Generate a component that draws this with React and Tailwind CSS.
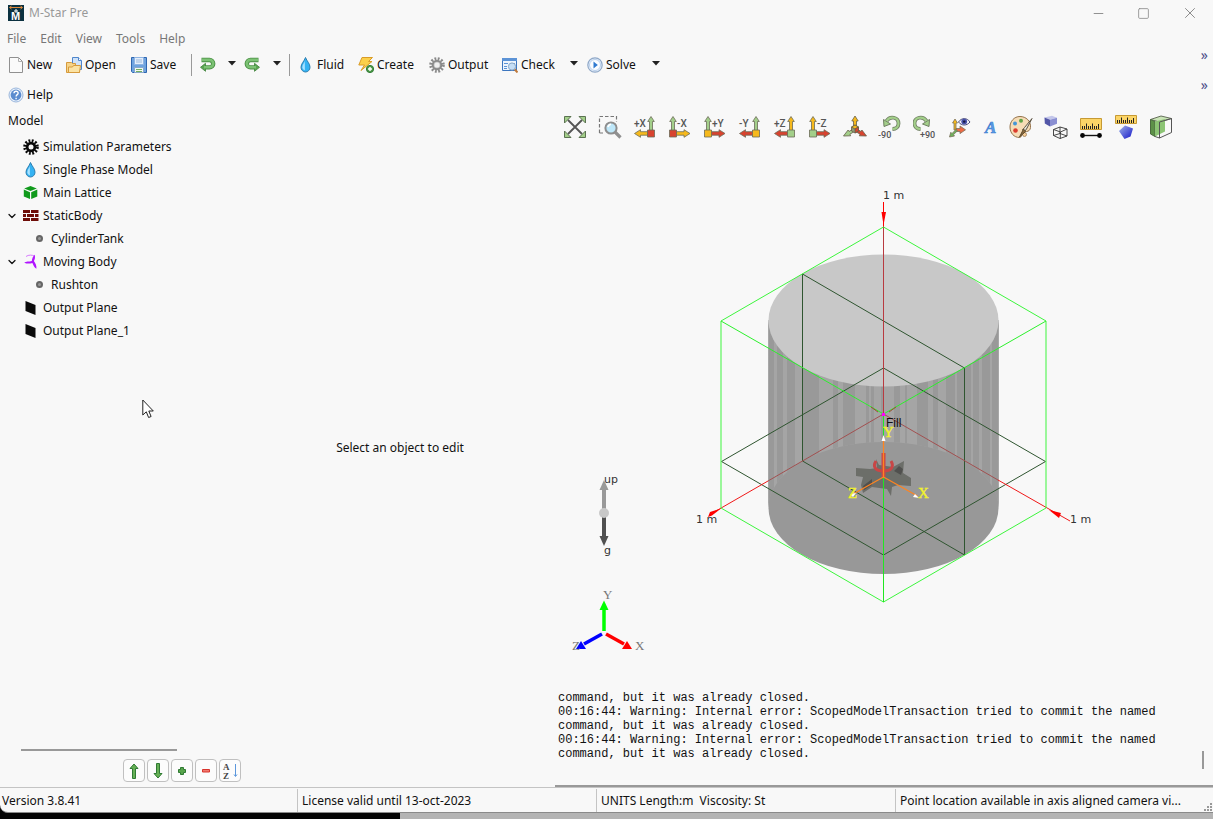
import { Minus, Square, X, ChevronDown } from 'lucide-react';

const NewIcon = () => (
  <svg viewBox="0 0 16 16" className="h-4 w-4">
    <path d="M1.500 .5h9l4 4v11h-13z" fill="#fafafa" stroke="#909090" />
    <path d="M10.500 .5v4h4" fill="none" stroke="#b0b0b0" />
  </svg>
);

const OpenIcon = () => (
  <svg viewBox="0 0 16 16" className="h-4 w-4">
    <path d="M6.500 .5h6l3 3v9h-9z" fill="#cfe2f8" stroke="#4f86cc" />
    <path d="M12.500 .5v3h3" fill="#fff" stroke="#4f86cc" />
    <path d="M.5 5.500h5l1 1h3l0 2h4v7h-13z" fill="#f6d489" stroke="#d69a3c" />
    <path d="M2.500 15.500l0-5.500h4l1-1.500h7l-1 7z" fill="#fbe3a4" stroke="#d69a3c" />
  </svg>
);

const SaveIcon = () => (
  <svg viewBox="0 0 16 16" className="h-4 w-4">
    <path d="M.5 .5h15v15h-14l-1-1z" fill="#6fa3df" stroke="#2f66b0" />
    <path d="M3.500 .5h9v7h-9z" fill="#e4eefb" stroke="#8fb4e2" />
    <path d="M5 3h6M5 5h6" stroke="#9ab8dc" />
    <path d="M3.500 10.500h9v5h-9z" fill="#f4f8f0" stroke="#88a8cc" />
    <path d="M5 12.500h6M5 14.500h6" stroke="#74b060" />
  </svg>
);

const UndoIcon = ({ flip }) => (
  <svg viewBox="0 0 16 16" className={flip ? 'mb-[3px] h-4 w-4 -scale-x-100' : 'mb-[3px] h-4 w-4'}>
    <path d="M1.500 4h8a3.700 3.700 0 0 1 0 7.400H5" fill="none" stroke="#4a8f45" strokeWidth="4.400" />
    <path d="M5.500 7.300v8l-5-4z" fill="#5aa552" stroke="#3f833b" strokeWidth=".8" />
    <path d="M2 3.900h7.500a3.700 3.700 0 0 1 0 7.400H4" fill="none" stroke="#7cc274" strokeWidth="2.600" />
  </svg>
);

const DropIcon = () => (
  <svg viewBox="0 0 16 16" className="h-4 w-4">
    <path d="M7.500 .5c1.500 4 4.500 6 4.500 9.700a4.500 4.800 0 0 1-9 0c0-3.700 3.200-5.700 4.500-9.700z" fill="#35b3f3" stroke="#2b7eb0" />
    <path d="M6.800 4c-.4 2-2.600 4-2.500 6.500.2 1.600 1.400 2.400 2.600 2.800z" fill="#a9e2ff" />
  </svg>
);

const CreateIcon = () => (
  <svg viewBox="0 0 16 16" className="h-4 w-4">
    <path d="M4 .5h10.500l-4 4H14L3 13.500l3.500-5.500H.8z" fill="#fbd04a" stroke="#d99c28" />
    <circle cx="12" cy="12" r="3.600" fill="#4f9b4a" stroke="#2f7a33" />
    <path d="M12 10v4M10 12h4" stroke="#fff" strokeWidth="1.400" />
  </svg>
);

const Gear = ({ color, hub, hole }) => (
  <svg viewBox="0 0 16 16" className="h-4 w-4">
    <circle cx="8" cy="8" r="6.300" fill="none" stroke={color} strokeWidth="3" strokeDasharray="1.800 1.500" />
    <circle cx="8" cy="8" r="4.300" fill={hub} stroke={color} strokeWidth="2" />
    <circle cx="8" cy="8" r="2.500" fill={hole} />
  </svg>
);

const CheckIcon = () => (
  <svg viewBox="0 0 16 16" className="h-4 w-4">
    <path d="M.5 1.500h14v12H.5z" fill="#eef5fd" stroke="#3d76bf" />
    <path d="M0 1h15v3H0z" fill="#5c93d6" />
    <path d="M2 6.500h4M2 9.500h3M2 11.500h3M8 6.500h5" stroke="#5c93d6" />
    <path d="M12.500 12l3 3.500" stroke="#c07a3c" strokeWidth="2" />
    <circle cx="10" cy="9.500" r="3.600" fill="#c5def6" stroke="#8aa8c8" />
  </svg>
);

const SolveIcon = () => (
  <svg viewBox="0 0 16 16" className="h-4 w-4">
    <circle cx="8" cy="8" r="7.200" fill="#e8f0fa" stroke="#8fa8c8" strokeWidth="1.200" />
    <circle cx="8" cy="8" r="5.500" fill="#fbfdff" stroke="#b9d0ec" />
    <path d="M6.500 4.500L10.800 8l-4.300 3.500z" fill="#2f7ad0" />
  </svg>
);

const HelpIcon = () => (
  <svg viewBox="0 0 16 16" className="h-4 w-4">
    <circle cx="8" cy="8" r="7" fill="#e9f1fb" stroke="#9ab6dc" />
    <circle cx="8" cy="8" r="5.400" fill="#5b8ccf" />
    <path d="M6 6.300c.2-2.800 4.200-2.500 4.100-.1 0 1.400-2 1.500-2 3.300M8.100 10.800v1.400" fill="none" stroke="#fff" strokeWidth="1.400" />
  </svg>
);

const CubeIcon = () => (
  <svg viewBox="0 0 16 16" className="h-4 w-4">
    <path d="M7.500 1l6.300 2.400-6.300 2.700-6.300-2.700zM.8 4.600L7 7.200v6.800L.8 11.500zM14.300 4.600L8.200 7.200v6.800l6.100-2.500z" fill="#109a1c" />
  </svg>
);

const BricksIcon = () => (
  <svg viewBox="0 0 16 16" className="h-4 w-4" fill="#6e0d08">
    <path d="M0 2h7v3H0zM8 2h7.500v3H8zM0 6h3v3H0zM4 6h7v3H4zM12 6h3.500v3H12zM0 10h7v3H0zM8 10h7.500v3H8z" />
  </svg>
);

const PropIcon = () => (
  <svg viewBox="0 0 16 16" className="h-4 w-4">
    <path d="M3 2.500c2.500-2 6.500-1.500 8.500-.5" fill="none" stroke="#d77bff" />
    <path d="M11.800 .8c.6 3.500-.2 5-.9 6.300 1.500 2.200 2.900 4.700 2.500 7.700-2-.8-3.200-3.700-4-5.700C6 10 3 9.700 1.200 8.400 3 7.500 6 7.700 8.800 7 9.200 4.500 10 2 11.800 .8z" fill="#b014ff" />
  </svg>
);

const PlaneIcon = () => (
  <svg viewBox="0 0 16 16" className="h-4 w-4">
    <path d="M2.500 1l10 4v10l-10-4z" fill="#0a0a0a" />
  </svg>
);

const Caret = () => (
  <svg viewBox="0 0 8 5" className="mb-[3px] h-[5px] w-2">
    <path d="M0 0h8L4 4.500z" fill="#222" />
  </svg>
);

const tools = [
  { label: 'New', icon: <NewIcon />, cls: 'w-[58px]' },
  { label: 'Open', icon: <OpenIcon />, cls: 'w-[65px]' },
  { label: 'Save', icon: <SaveIcon />, cls: 'w-[60px]' },
  { sep: true },
  { name: 'Undo', icon: <UndoIcon />, cls: 'w-[32px] pl-2' },
  { name: 'Undo history', icon: <Caret />, cls: 'w-[20px] pl-1' },
  { name: 'Redo', icon: <UndoIcon flip />, cls: 'w-[25px]' },
  { name: 'Redo history', icon: <Caret />, cls: 'w-[20px] pl-1' },
  { sep: true },
  { label: 'Fluid', icon: <DropIcon />, cls: 'w-[68px] pl-2' },
  { label: 'Create', icon: <CreateIcon />, cls: 'w-[71px]' },
  { label: 'Output', icon: <Gear color="#8a8a8a" hub="#c4c4c4" hole="#efefef" />, cls: 'w-[73px]' },
  { label: 'Check', icon: <CheckIcon />, cls: 'w-[64px]' },
  { name: 'Check options', icon: <Caret />, cls: 'w-[21px] pl-1' },
  { label: 'Solve', icon: <SolveIcon />, cls: 'w-[61px]' },
  { name: 'Solve options', icon: <Caret />, cls: 'w-[20px] pl-1' },
];

const tree = [
  { label: 'Simulation Parameters', icon: <Gear color="#0a0a0a" hub="#0a0a0a" hole="#f8f8f8" /> },
  { label: 'Single Phase Model', icon: <DropIcon /> },
  { label: 'Main Lattice', icon: <CubeIcon /> },
  { label: 'StaticBody', icon: <BricksIcon />, open: true },
  { label: 'CylinderTank', child: true },
  { label: 'Moving Body', icon: <PropIcon />, open: true },
  { label: 'Rushton', child: true },
  { label: 'Output Plane', icon: <PlaneIcon /> },
  { label: 'Output Plane_1', icon: <PlaneIcon /> },
];

const GREEN = '#a3cf8a';
const RED = '#d8432f';
const GOLD = '#f6b91c';

// Axis view: an upright arrow and a sideways arrow that share a corner block
const AxisIcon = ({ label, left, up, side, corner }) => {
  const x = left ? 18 : 5;
  return (
    <svg viewBox="0 0 24 24" className="h-6 w-6">
      <g stroke="#6b6b58" strokeWidth=".8">
        <path d={`M${x - 1.500} 16V6.500h-1.800L${x} 1.500l3.300 5h-1.800V16z`} fill={up} />
        <path
          d={left ? 'M15 16.700H7.500v-2L1.500 18.500l6 3.800v-2.100H15z' : 'M8 16.700h8v-2l6 3.800-6 3.800v-2.100H8z'}
          fill={side}
        />
        <path d={`M${x - 3.500} 15h7v7h-7z`} fill={corner} />
      </g>
      <text x={left ? 1 : 9} y="11.500" fontFamily="Roboto, sans-serif" fontWeight="500" fontSize="10" fill="#555">
        {label}
      </text>
    </svg>
  );
};

const RotateIcon = ({ label, cw }) => (
  <svg viewBox="0 0 24 24" className="h-6 w-6">
    <g transform={cw ? 'translate(22 0) scale(-1 1)' : undefined}>
      <path d="M8.500 6C12 .5 20.500 2 20.500 8.500c0 3.500-2.600 5.500-6 5.500" fill="none" stroke="#6f7f62" strokeWidth="3.800" />
      <path d="M5.500 4.500l.5 7 6.500-2.500z" fill={GREEN} stroke="#6f7f62" />
      <path d="M8.500 6C12 .5 20.500 2 20.500 8.500c0 3.500-2.600 5.500-6 5.500" fill="none" stroke={GREEN} strokeWidth="2.200" />
    </g>
    <text x={cw ? 7 : 0} y="23" fontFamily="Roboto, sans-serif" fontWeight="500" fontSize="9" fill="#555">
      {label}
    </text>
  </svg>
);

const FitIcon = () => (
  <svg viewBox="0 0 24 24" className="h-6 w-6">
    <path d="M5 5l14 14M19 5L5 19" stroke="#555" strokeWidth="1.800" />
    <path d="M1.500 1.500H8L1.500 8zM22.500 1.500V8L16 1.500zM1.500 22.500V16L8 22.500zM22.500 22.500H16l6.500-6.500z" fill={GREEN} stroke="#5c7352" />
  </svg>
);

const ZoomBoxIcon = () => (
  <svg viewBox="0 0 24 24" className="h-6 w-6">
    <path d="M1.500 18V1.500h17V7M1.500 18h4" fill="none" stroke="#777" strokeWidth="1.200" strokeDasharray="3.500 2" />
    <path d="M17 17l5.500 5.500" stroke="#909090" strokeWidth="3.200" />
    <circle cx="13" cy="13" r="5.600" fill="#bfe8fa" stroke="#8e8e8e" strokeWidth="2" />
    <path d="M10 12a3.500 3.500 0 0 1 3-2.800" fill="none" stroke="#fff" strokeWidth="1.600" />
  </svg>
);

const IsoIcon = () => (
  <svg viewBox="0 0 24 24" className="h-6 w-6">
    <g stroke="#66604a" strokeWidth=".8">
      <path d="M10.500 11V6H8.800L12 1l3.200 5h-1.700v5z" fill={GOLD} />
      <path d="M10 14l-4 2.500-.9-1.500-4.600 6 7.200-.2-.8-1.600 4.500-2.700z" fill={GREEN} />
      <path d="M14 14l4 2.500 .9-1.500 4.600 6-7.200-.2 .8-1.600-4.500-2.700z" fill={RED} />
      <path d="M12 10l3.500 2v4L12 18l-3.500-2v-4z" fill="#8f9a78" />
      <path d="M12 10l3.500 2-3.500 2-3.500-2z" fill={GOLD} />
      <path d="M12 14l3.500-2v4L12 18z" fill={RED} />
    </g>
  </svg>
);

const AxesEyeIcon = () => (
  <svg viewBox="0 0 24 24" className="h-6 w-6">
    <g stroke="#7a705c" strokeWidth=".8">
      <path d="M6 15V8H4.500L7 4l2.500 4H8v7z" fill={GOLD} />
      <path d="M8 13.500h4v-2.500l5.500 3.800-5.500 3.800V16.500H8z" fill="#ee6a44" />
      <path d="M8 14.500l-4 4-1.200-1.200L1.500 22l5-1-1-1.300 4-4z" fill="#6db35a" />
    </g>
    <path d="M10.500 7c3-4.500 8.500-4.500 11.500 0-3 4-8.500 4-11.500 0z" fill="#f4f4fa" stroke="#4a4a78" />
    <circle cx="16.200" cy="6.600" r="2.900" fill="#4750a8" />
    <circle cx="16.200" cy="6.600" r="1.200" fill="#15153c" />
  </svg>
);

const LabelsIcon = () => (
  <svg viewBox="0 0 24 24" className="h-6 w-6">
    <text x="7" y="17.500" fontFamily="Liberation Serif, serif" fontWeight="bold" fontStyle="italic" fontSize="17" fill="#5b9be6" stroke="#3f7fd0" strokeWidth=".6">
      A
    </text>
  </svg>
);

const PaletteIcon = () => (
  <svg viewBox="0 0 24 24" className="h-6 w-6">
    <path d="M11 1.500C5 1.500 1 6.500 1 12c0 6 4 10.500 9.500 10.500 2.500 0 1.500-3 2.500-4.500 1.500-2 8 0 8.500-5.500C22 6 17 1.500 11 1.500z" fill="#f6dcb6" stroke="#94724a" />
    <circle cx="6" cy="8.500" r="2" fill="#4596d6" />
    <circle cx="12" cy="5.800" r="2" fill="#5fa346" />
    <circle cx="6.500" cy="15.500" r="2.300" fill="#dc3b2c" />
    <circle cx="15.500" cy="19.500" r="2" fill="#f7cf9a" stroke="#94724a" strokeWidth=".7" />
    <path d="M23 3.500l-7.500 9-2 2.500 2 1.500 2-2.500z" fill="#e8e4d8" stroke="#5c5242" />
    <path d="M14.500 14l-4 8 6-5.500z" fill="#8c6b40" stroke="#5c4a2c" />
  </svg>
);

const SolidWireIcon = () => (
  <svg viewBox="0 0 24 24" className="h-6 w-6">
    <path d="M.5 2.500L8 .8l5 2-7 2z" fill="#c3c6ea" />
    <path d="M.5 2.500l5.500 2.300v6.700L.8 8.500z" fill="#5357a8" />
    <path d="M6 4.800l7-2v6l-7 2.700z" fill="#8a8fd2" />
    <path d="M16 12l7 2v7l-7 2.500-6.500-3v-6zM9.500 14.500l7 2.500 6.500-3M16.300 17v6.500M16 12v6.500l-6.500 2M16 18.500l7 2.500" fill="none" stroke="#333" strokeWidth=".9" />
  </svg>
);

const Ruler = ({ h }) => (
  <>
    <path d={`M1.500 1.500h21v${h}h-21z`} fill="#fcd567" stroke="#c69a34" />
    <path d="M3.500 9v3M5.500 9v3M7.500 6.500V12M9.500 9v3M11.500 9v3M13.500 6.500V12M15.500 9v3M17.500 9v3M19.500 7v5" stroke="#222" transform={`translate(0 ${h - 11})`} />
  </>
);

const MeasureIcon = () => (
  <svg viewBox="0 0 24 24" className="h-6 w-6">
    <g transform="translate(0 2)">
      <Ruler h={11} />
    </g>
    <path d="M4 20.500h16" stroke="#111" strokeWidth="1.400" />
    <circle cx="3.500" cy="20.500" r="2.400" fill="#050505" />
    <circle cx="20.500" cy="20.500" r="2.400" fill="#050505" />
  </svg>
);

const MeasureShapeIcon = () => (
  <svg viewBox="0 0 24 24" className="h-6 w-6">
    <defs>
      <linearGradient id="pent" x1="0" y1="0" x2="1" y2="1">
        <stop offset="0" stopColor="#9fb4ea" />
        <stop offset="1" stopColor="#1515c8" />
      </linearGradient>
    </defs>
    <g transform="translate(0 -1)">
      <Ruler h={8} />
    </g>
    <path d="M11 10.500l8 3-2.500 8-6 2.500-5.500-8z" fill="url(#pent)" />
  </svg>
);

const ClipIcon = () => (
  <svg viewBox="0 0 24 24" className="h-6 w-6">
    <path d="M1.500 4.500L12 1l10.500 2.500-12 3.500z" fill="#c9e4b6" stroke="#666f5c" />
    <path d="M1.500 4.500l4.500 2v15l-4.500-2.500z" fill="#5d9148" stroke="#4c6b40" />
    <path d="M6 6.500L16 4v12.500l-10 5z" fill="#8cc474" />
    <path d="M10.500 7l12-3.500v14l-12 5.500z" fill="none" stroke="#555" />
    <path d="M6 21.500l4.500 1.500" stroke="#555" />
  </svg>
);

const viewTools = [
  { name: 'Fit view', icon: <FitIcon /> },
  { name: 'Zoom to box', icon: <ZoomBoxIcon /> },
  { name: 'View +X', icon: <AxisIcon label="+X" left up={GREEN} side={GOLD} corner={RED} /> },
  { name: 'View -X', icon: <AxisIcon label="-X" up={GREEN} side={GOLD} corner={RED} /> },
  { name: 'View +Y', icon: <AxisIcon label="+Y" up={GREEN} side={RED} corner={GOLD} /> },
  { name: 'View -Y', icon: <AxisIcon label="-Y" left up={GREEN} side={RED} corner={GOLD} /> },
  { name: 'View +Z', icon: <AxisIcon label="+Z" left up={GOLD} side={RED} corner={GREEN} /> },
  { name: 'View -Z', icon: <AxisIcon label="-Z" up={GOLD} side={RED} corner={GREEN} /> },
  { name: 'Isometric', icon: <IsoIcon /> },
  { name: 'Rotate -90', icon: <RotateIcon label="-90" /> },
  { name: 'Rotate +90', icon: <RotateIcon label="+90" cw /> },
  { name: 'Show axes', icon: <AxesEyeIcon /> },
  { name: 'Labels', icon: <LabelsIcon />, narrow: true },
  { name: 'Colors', icon: <PaletteIcon /> },
  { name: 'Solid or wireframe', icon: <SolidWireIcon /> },
  { name: 'Measure distance', icon: <MeasureIcon /> },
  { name: 'Measure shape', icon: <MeasureShapeIcon /> },
  { name: 'Clip', icon: <ClipIcon /> },
];

const treeTools = [
  { name: 'Move up', icon: <path d="M8 1l4 4.500H9.500v10h-3v-10H4z" fill="#66b055" stroke="#2f7a33" /> },
  { name: 'Move down', icon: <path d="M8 15l-4-4.500h2.500V.5h3v10H12z" fill="#66b055" stroke="#2f7a33" /> },
  { name: 'Add', icon: <path d="M6.500 4.500h3v2h2v3h-2v2h-3v-2h-2v-3h2z" fill="#58a54c" stroke="#2f7a33" /> },
  { name: 'Remove', icon: <path d="M4.500 6.500h7v2.500h-7z" fill="#f07a70" stroke="#d8342c" /> },
  {
    name: 'Sort',
    icon: (
      <>
        <text x="1" y="6.500" fontFamily="Liberation Serif, serif" fontWeight="bold" fontSize="9" fill="#444">A</text>
        <text x="1" y="15.500" fontFamily="Liberation Serif, serif" fontWeight="bold" fontSize="9" fill="#444">Z</text>
        <path d="M13.500 1v12M12 11.500l1.500 2 1.500-2" fill="none" stroke="#5b97dc" />
      </>
    ),
  },
];

// x and width of the darker facets on the tank wall
const facets = [
  [768, 6], [777, 6], [787, 8], [803, 16], [833, 5], [843, 12], [866, 3], [871, 3], [881, 3],
  [894, 6], [905, 2], [917, 11], [933, 5], [946, 9], [957, 14], [973, 6], [982, 8], [992, 7],
];

const log = `command, but it was already closed.
00:16:44: Warning: Internal error: ScopedModelTransaction tried to commit the named
command, but it was already closed.
00:16:44: Warning: Internal error: ScopedModelTransaction tried to commit the named
command, but it was already closed.`;

const Viewport = () => (
  <svg viewBox="550 145 663 545" className="block w-full min-h-0 flex-1" role="img" aria-label="Model view">
    <defs>
      <clipPath id="wall">
        <path d="M768.500 320v188a115 66 0 0 1 230 0V320a115 66 0 0 1-230 0z" />
      </clipPath>
    </defs>

    {/* tank */}
    <path d="M768.500 320v188a115 66 0 0 0 230 0V320z" fill="#989898" />
    <g clipPath="url(#wall)">
      <path d="M768 320h231v188h-231z" fill="#a5a5a5" />
      {facets.map(([x, w]) => (
        <rect key={x} x={x} y="320" width={w} height="188" fill="#999" />
      ))}
    </g>
    <ellipse cx="883.500" cy="320.500" rx="115" ry="66" fill="#c8c8c8" />

    {/* impeller */}
    <path d="M856 468l14 1 7-1-1-9 3 6 14 2 11-6-1 12 8 5v8l-13-1-6 2-1 9-4-7-15-2-9 6-2-8 2-8-7-1z" fill="#6c6e69" />
    <path d="M863 486l9-7v6l-8 5zM894 471l5-5 4 3-2 6z" fill="#50504e" />
    <g fill="none" stroke="#c84646">
      <path d="M883.500 453v24" strokeWidth="4" />
      <path d="M876 461c-4 6 0 10 7.500 10s11-4 7.500-10" strokeWidth="3" />
    </g>

    {/* slice planes */}
    <path d="M802.500 274L964.500 368v187L802.500 461zM883.500 368l162 93.500-162 93.500-162-93.500z" fill="none" stroke="#2f5530" />

    {/* axis arrows */}
    <g fill="none" stroke="#f01818">
      <path d="M883.500 202v25" stroke="#f00" />
      <path d="M883.500 227v187" stroke="#b83a40" />
      <path d="M883.500 414L768 481M883.500 414L998 480" stroke="#a25050" />
      <path d="M768 481l-59 34M998 480l72 41" />
    </g>
    <path d="M881.500 212h4.500l-2.500 13zM708 517l2-5 11-3.500-9 7zM1049 510l12 3-2 5z" fill="#f00" />

    {/* lattice bounds */}
    <path d="M883.500 227l162.500 94v187l-162.500 94-162.500-94V321z" fill="none" stroke="#3df53d" />
    <path d="M721 321l162.500 93 162.500-93" fill="none" stroke="#2cf02c" />
    <path d="M883.500 414v188" stroke="#20e820" />
    <path d="M871 407l7 5M896 407l-7 5" stroke="#a04830" />
    <path d="M882 413h3v3h-3z" fill="#f0f" />

    {/* body axes */}
    <path d="M883.500 477v-40M883.500 477l-32 18M883.500 477l34 19" fill="none" stroke="#ff8420" strokeWidth="1.300" />
    <path d="M883.500 435l2 6h-4zM850 494l6-1-3 4zM919 498l-6-1 2-3z" fill="#fff" />
    <g fontFamily="Liberation Serif, serif" fontSize="15" fill="#f2f22c" stroke="#f2f22c" strokeWidth=".4">
      <text x="883" y="437">Y</text>
      <text x="848" y="498">Z</text>
      <text x="918" y="498">X</text>
    </g>
    <text x="886" y="427" fontFamily="Liberation Sans, sans-serif" fontSize="12" fill="#111">Fill</text>

    <g fontFamily="DejaVu Sans, sans-serif" fontSize="11" fill="#333">
      <text x="883" y="199">1 m</text>
      <text x="696" y="523">1 m</text>
      <text x="1070" y="523">1 m</text>
      <text x="604" y="483">up</text>
      <text x="604" y="554">g</text>
    </g>

    {/* gravity */}
    <path d="M604 513v-24" stroke="#999" strokeWidth="4" />
    <path d="M604 480l4.500 10h-9z" fill="#999" />
    <path d="M604 513v24" stroke="#505050" strokeWidth="4" />
    <path d="M604 546l4.500-10h-9z" fill="#505050" />
    <circle cx="604" cy="513" r="5" fill="#c8c8c8" />

    {/* orientation triad */}
    <path d="M604 631v-23" stroke="#0f0" strokeWidth="3.500" />
    <path d="M604 600.500l4.500 9.500h-9z" fill="#0f0" />
    <path d="M602 634l-18 10" stroke="#00f" strokeWidth="3.500" />
    <path d="M576 649l5-8 5 8z" fill="#00f" />
    <path d="M606 634l18 10" stroke="#f00" strokeWidth="3.500" />
    <path d="M632 649l-5-8-5 8z" fill="#f00" />
    <g fontFamily="Liberation Serif, serif" fontSize="13" fill="#777">
      <text x="603" y="599">Y</text>
      <text x="572" y="650">Z</text>
      <text x="635" y="650">X</text>
    </g>
  </svg>
);

const TitleBar = () => (
  <header className="flex h-[26px] items-center pl-2 text-[#999]">
    <svg viewBox="0 0 16 16" className="h-4 w-4">
      <path d="M0 0h16v16H0z" fill="#0b3140" />
      <path d="M2 2.500h12M3.500 1L1.500 2.500 3.500 4M12.500 1l2 1.500-2 1.500" fill="none" stroke="#e08a3c" />
      <path d="M8 4v4M6 6h4" stroke="#fff" />
      <text x="3" y="14.500" fontFamily="Liberation Sans, sans-serif" fontWeight="bold" fontSize="11" fill="#fff">M</text>
    </svg>
    <span className="ml-[5px]">M-Star Pre</span>
    <div className="ml-auto flex h-full text-[#8a8a8a]">
      <button aria-label="Minimize" className="flex w-[46px] items-center justify-center"><Minus size={15} strokeWidth={1.500} /></button>
      <button aria-label="Maximize" className="flex w-[45px] items-center justify-center"><Square size={13} strokeWidth={1.500} /></button>
      <button aria-label="Close" className="flex w-[47px] items-center justify-center"><X size={18} strokeWidth={1.300} /></button>
    </div>
  </header>
);

const ToolButton = ({ label, name, icon, cls }) => (
  <button aria-label={name} className={`flex h-[30px] shrink-0 items-center gap-[3px] ${cls}`}>
    {icon}
    {label && <span>{label}</span>}
  </button>
);

const More = ({ name }) => (
  <button aria-label={name} className="mr-[5px] mb-5 ml-auto text-sm text-[#4c4c88]">»</button>
);

const App = () => (
  <div className="flex min-h-screen flex-col bg-[linear-gradient(to_right,#050505_400px,#b4b4b4_400px)] font-['Noto_Sans',sans-serif] text-[12px] leading-4 text-[#111]">
    <div className="flex flex-1 flex-col rounded-bl-lg border-b border-[#8a8a8a] bg-[#f8f8f8]">
      <TitleBar />

      <nav className="flex h-[25px] items-center gap-[14px] pl-[7px] text-[#777]">
        {['File', 'Edit', 'View', 'Tools', 'Help'].map((item) => (
          <button key={item}>{item}</button>
        ))}
      </nav>

      <div className="flex h-7 items-center pl-2">
        {tools.map((tool, i) =>
          tool.sep ? <div key={i} className="h-[22px] w-px bg-[#9a9a9a]" /> : <ToolButton key={i} {...tool} />
        )}
        <More name="More tools" />
      </div>
      <div className="flex h-[30px] items-center pt-px pl-2">
        <ToolButton label="Help" icon={<HelpIcon />} cls="w-[60px]" />
        <More name="More help" />
      </div>

      <main className="flex flex-1">
        <aside className="relative flex w-[250px] shrink-0 flex-col">
          <h2 className="mb-[2px] flex h-6 items-center pl-2">Model</h2>
          <ul>
            {tree.map((row) => (
              <li key={row.label} className={`flex h-[23px] items-center ${row.child ? 'pl-[36px]' : 'pl-[6px]'}`}>
                {row.child ? (
                  <span className="mr-2 h-[7px] w-[7px] rounded-full border-2 border-[#666] bg-[#999]" />
                ) : (
                  <>
                    <span className="w-[17px]">{row.open && <ChevronDown size={12} strokeWidth={2.500} />}</span>
                    <span className="mr-1">{row.icon}</span>
                  </>
                )}
                <span>{row.label}</span>
              </li>
            ))}
          </ul>
          <svg viewBox="0 0 12 20" className="absolute top-[290px] left-[142px] h-5 w-3">
            <path d="M.8 1v15l3.500-3.200 2.300 5.700 2.500-1-2.300-5.500h4.500z" fill="#fff" stroke="#222" />
          </svg>
          <div className="mt-auto mb-2 ml-[21px] h-[2px] w-[156px] bg-[#999]" />
          <div className="mb-[5px] flex gap-[2px] pl-[123px]">
            {treeTools.map((tool) => (
              <button key={tool.name} aria-label={tool.name} className="flex h-[23px] w-[22px] items-center justify-center rounded-sm border border-[#c0c0c0] bg-[#fcfcfc]">
                <svg viewBox="0 0 16 16" className="h-4 w-4">{tool.icon}</svg>
              </button>
            ))}
          </div>
        </aside>

        <section className="flex w-[300px] shrink-0 items-center justify-center">Select an object to edit</section>

        <section className="flex min-w-0 flex-1 flex-col">
          <div className="flex h-[35px] items-center pl-[7px]">
            {viewTools.map((tool) => (
              <button key={tool.name} aria-label={tool.name} className={`flex shrink-0 justify-center ${tool.narrow ? 'w-[26px]' : 'w-[35px]'}`}>
                {tool.icon}
              </button>
            ))}
          </div>
          <Viewport />
          <div className="ml-[5px] flex h-[96px] items-start justify-between border-b-2 border-[#999] pr-[9px] pl-[3px]">
            <pre className="font-['Liberation_Mono',monospace] text-[12px] leading-[14px]">{log}</pre>
            <div className="mt-[60px] h-[18px] w-[2px] bg-[#999]" />
          </div>
        </section>
      </main>

      <footer className="grid h-[25px] grid-cols-[297fr_299fr_299fr_318fr] border-t border-[#c4c4c4] pt-px">
        <div className="flex items-center pl-[2px]">Version 3.8.41</div>
        <div className="flex items-center border-l border-[#c4c4c4] pl-1">License valid until 13-oct-2023</div>
        <div className="flex items-center border-l border-[#c4c4c4] pl-1 whitespace-pre">UNITS Length:m  Viscosity: St</div>
        <div className="flex min-w-0 items-center border-l border-[#c4c4c4] pl-1">
          <span className="truncate">Point location available in axis aligned camera vi...</span>
          <svg viewBox="0 0 9 9" className="mt-auto ml-auto h-[9px] w-[9px] shrink-0" fill="#999">
            <path d="M6 0h2v2H6zM3 3h2v2H3zM6 3h2v2H6zM0 6h2v2H0zM3 6h2v2H3zM6 6h2v2H6z" />
          </svg>
        </div>
      </footer>
    </div>
    <div className="h-[6px]" />
  </div>
);

export default App;
